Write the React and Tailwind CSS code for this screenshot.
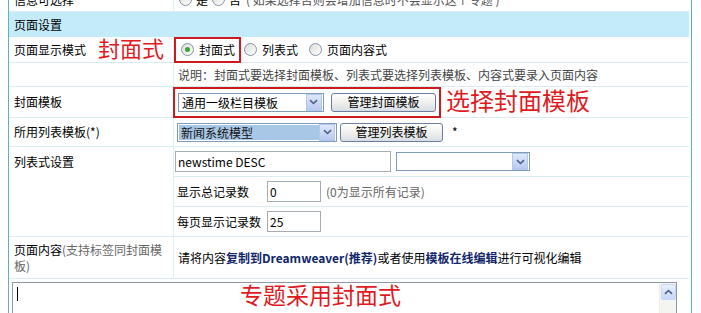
const FONT = { fontFamily: '"Noto Sans CJK SC", "Liberation Sans", sans-serif' }
const SERIF = { fontFamily: '"Liberation Serif", "Noto Sans CJK SC", serif' }

function Radio({ checked }) {
  return (
    <span className="inline-flex w-[13px] h-[13px] rounded-full border border-[#8393a6] bg-gradient-to-br from-[#dcdcd6] to-white items-center justify-center shrink-0">
      {checked && <span className="w-[5px] h-[5px] rounded-full bg-[#3fa33a]" />}
    </span>
  )
}

function Arrow() {
  return (
    <span className="w-[16px] h-[17px] flex items-center justify-center bg-gradient-to-b from-[#dfe8fb] to-[#b7c9ef] border border-[#b4c6ee] shrink-0">
      <svg width="9" height="6" viewBox="0 0 9 6">
        <path d="M1 1.2 L4.5 4.5 L8 1.2" stroke="#4d6185" strokeWidth="1.6" fill="none" />
      </svg>
    </span>
  )
}

function Select({ width, value, selected }) {
  return (
    <div className="h-[19px] border border-[#7f9db9] bg-white flex items-center pl-[1px] pr-[1px]" style={{ width }}>
      <span className={`flex-1 h-[15px] leading-[15px] px-[2px] text-[12px] ${selected ? 'bg-[#a8c6e6] text-[#111]' : 'text-black'}`}>{value}</span>
      <Arrow />
    </div>
  )
}

function Button({ children, width }) {
  return (
    <div className="h-[19px] rounded-[3px] border border-[#6b7f9c] bg-gradient-to-b from-white via-[#f0f0ee] to-[#d8dde6] flex items-center justify-center text-[12px] text-black" style={{ width }}>
      {children}
    </div>
  )
}

function Input({ width, value }) {
  return (
    <div className="h-[21px] border border-[#a5acb2] bg-white text-[12px] leading-[19px] px-[2px] text-black" style={{ width }}>
      {value}
    </div>
  )
}

function Row({ label, children, h }) {
  return (
    <div className="flex border-b border-[#d9ecf1]" style={{ height: h }}>
      <div className="w-[165px] shrink-0 border-r border-[#e2f0f4] pl-[5px] flex items-center text-[12px] text-black">{label}</div>
      <div className="flex-1 min-w-0 flex items-center pl-[4px]">{children}</div>
    </div>
  )
}

export default function App() {
  return (
    <div className="w-[701px] h-[313px] overflow-hidden bg-white" style={FONT}>
      <div className="ml-[8px] w-[684px] h-[313px] border-x border-[#5db3bd] pr-[2px]">
        {/* row cut at top */}
        <div className="flex h-[12px] border-b border-[#d9ecf1] overflow-hidden">
          <div className="w-[165px] shrink-0 border-r border-[#e2f0f4] pl-[5px] text-[12px] leading-[12px] -mt-[6px]">信息可选择</div>
          <div className="flex-1 flex items-center gap-[4px] pl-[5px] text-[12px] leading-[12px] -mt-[12px]">
            <Radio /> <span>是</span> <Radio /> <span>否</span>
            <span className="text-[#555] ml-[1px]">( 如果选择否则会增加信息时不会显示这个专题 )</span>
          </div>
        </div>

        <div className="h-[25px] bg-[#c3ebfa] flex items-center pl-[5px] text-[12px] text-black">页面设置</div>

        <Row h={26} label={
          <div className="flex items-center w-full">
            <span>页面显示模式</span>
            <span className="ml-[12px] text-[22px] leading-[22px] text-[#df1b1f]" style={SERIF}>封面式</span>
          </div>
        }>
          <div className="flex items-center text-[12px] -ml-[4px]">
            <div className="h-[26px] border-2 border-[#cd1a1f] flex items-center gap-[5px] pl-[5px] pr-[4px]">
              <Radio checked />
              <span>封面式</span>
            </div>
            <div className="flex items-center gap-[5px] ml-[3px]">
              <Radio /><span>列表式</span>
              <span className="w-[1px]" />
              <Radio /><span>页面内容式</span>
            </div>
          </div>
        </Row>

        <Row h={24} label="">
          <span className="text-[12px] text-[#444]">说明：封面式要选择封面模板、列表式要选择列表模板、内容式要录入页面内容</span>
        </Row>

        <Row h={31} label="封面模板">
          <div className="flex items-center -ml-[5px]">
            <div className="h-[31px] border-2 border-[#cd1a1f] flex items-center gap-[7px] pl-[3px] pr-[3px] w-[268px]">
              <Select width={147} value="通用一级栏目模板" />
              <Button width={106}>管理封面模板</Button>
            </div>
            <span className="ml-[5px] text-[24px] leading-[24px] text-[#df1b1f]" style={SERIF}>选择封面模板</span>
          </div>
        </Row>

        <Row h={29} label="所用列表模板(*)">
          <div className="flex items-center gap-[3px] -ml-[1px]">
            <Select width={160} value="新闻系统模型" selected />
            <Button width={103}>管理列表模板</Button>
            <span className="ml-[6px] text-[12px]">*</span>
          </div>
        </Row>

        <div className="flex border-b border-[#d9ecf1] h-[90px]">
          <div className="w-[165px] shrink-0 border-r border-[#e2f0f4] pl-[5px] pt-[6px] text-[12px] text-black">列表式设置</div>
          <div className="flex-1 flex flex-col">
            <div className="h-[30px] border-b border-[#d9ecf1] flex items-center pl-[1px] gap-[5px]">
              <Input width={216} value="newstime DESC" />
              <Select width={134} value="" />
            </div>
            <div className="h-[30px] border-b border-[#d9ecf1] flex items-center pl-[3px] text-[12px]">
              <span className="w-[90px]">显示总记录数</span>
              <Input width={54} value="0" />
              <span className="ml-[5px] text-[#666]">(0为显示所有记录)</span>
            </div>
            <div className="h-[29px] flex items-center pl-[3px] text-[12px]">
              <span className="w-[90px]">每页显示记录数</span>
              <Input width={54} value="25" />
            </div>
          </div>
        </div>

        <Row h={42} label={
          <div className="leading-[16px] pr-[6px]">
            页面内容<span className="text-[#666]">(支持标签同封面模板)</span>
          </div>
        }>
          <span className="text-[12px] text-black">
            请将内容<b className="text-[#10256a]">复制到Dreamweaver(推荐)</b>或者使用<b className="text-[#10256a]">模板在线编辑</b>进行可视化编辑
          </span>
        </Row>

        <div className="pt-[3px] pl-[3px]">
          <div className="w-[665px] h-[50px] border border-[#8c98a4] bg-white flex">
            <div className="flex-1 relative pl-[4px] pt-[4px]">
              <div className="w-[1px] h-[14px] bg-black" />
              <div className="absolute left-[227px] top-[2px] text-[23px] leading-[24px] text-[#df1b1f]" style={SERIF}>专题采用封面式</div>
            </div>
            <div className="w-[17px] bg-[#f4f4f0] border-l border-[#eeeeea] pt-[1px] flex justify-center">
              <div className="w-[15px] h-[16px] rounded-[2px] border border-[#cbd8f5] bg-gradient-to-b from-[#eaf0fd] to-[#c6d5f8] flex items-center justify-center">
                <svg width="9" height="6" viewBox="0 0 9 6">
                  <path d="M1 4.8 L4.5 1.5 L8 4.8" stroke="#4d6185" strokeWidth="1.6" fill="none" />
                </svg>
              </div>
            </div>
          </div>
        </div>
      </div>
    </div>
  )
}
